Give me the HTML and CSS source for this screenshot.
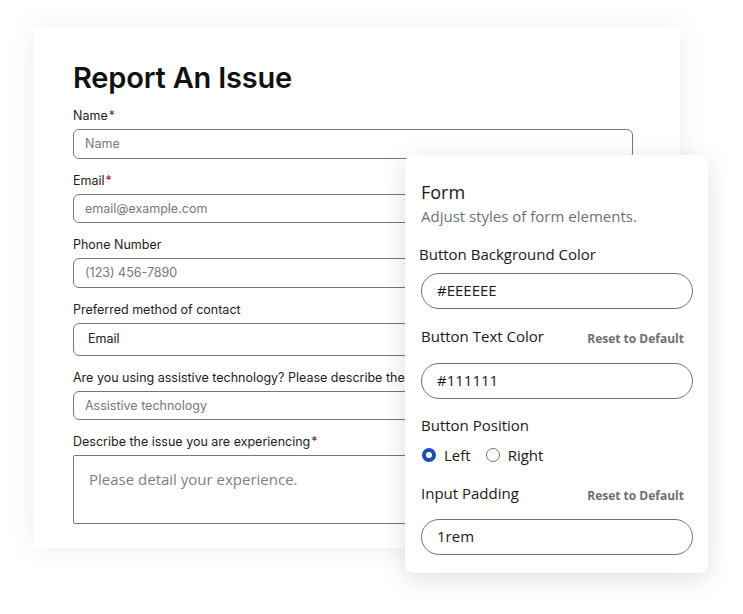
FILE: index.html
```html
<!DOCTYPE html>
<html lang="en">
<head>
  <meta charset="UTF-8">
  <meta name="viewport" content="width=device-width, initial-scale=1.0">
  <title>Report An Issue</title>
  <link rel="stylesheet" href="styles.css">
</head>
<body>

<div class="stage">
  <div class="report-card">
    <h1>Report An Issue</h1>

    <div class="field">
      <label for="name">Name<span class="req">*</span></label>
      <input type="text" id="name" class="text-input" placeholder="Name">
    </div>

    <div class="field">
      <label for="email">Email<span class="req">*</span></label>
      <input type="text" id="email" class="text-input" placeholder="email@example.com">
    </div>

    <div class="field">
      <label for="phone">Phone Number</label>
      <input type="text" id="phone" class="text-input" placeholder="(123) 456-7890">
    </div>

    <div class="field">
      <label for="contact">Preferred method of contact</label>
      <div class="select-box" id="contact">Email</div>
    </div>

    <div class="field">
      <label for="assist">Are you using assistive technology? Please describe the</label>
      <input type="text" id="assist" class="text-input" placeholder="Assistive technology">
    </div>

    <div class="field">
      <label for="issue">Describe the issue you are experiencing<span class="req">*</span></label>
      <textarea id="issue" class="text-area" placeholder="Please detail your experience."></textarea>
    </div>
  </div>

  <!-- style editor panel floating over the form -->
  <div class="style-panel">
    <h2>Form</h2>
    <p class="panel-sub">Adjust styles of form elements.</p>

    <div class="setting first">
      <div class="setting-head"><span>Button Background Color</span></div>
      <div class="pill">#EEEEEE</div>
    </div>

    <div class="setting">
      <div class="setting-head reset-row">
        <span>Button Text Color</span>
        <a href="#" class="reset">Reset to Default</a>
      </div>
      <div class="pill">#111111</div>
    </div>

    <div class="setting tight">
      <div class="setting-head"><span>Button Position</span></div>
      <div class="radios">
        <span class="radio checked"></span><span class="radio-label">Left</span>
        <span class="radio"></span><span class="radio-label">Right</span>
      </div>
    </div>

    <div class="setting">
      <div class="setting-head reset-row">
        <span>Input Padding</span>
        <a href="#" class="reset">Reset to Default</a>
      </div>
      <div class="pill">1rem</div>
    </div>
  </div>
</div>

</body>
</html>
```

FILE: styles.css
```css
body {
  margin: 0;
  padding: 0;
  background-color: #fff;
  font-family: Inter, 'Liberation Sans', sans-serif;
  overflow: hidden;
}

.stage {
  position: relative;
  width: 743px;
  height: 614px;
  padding: 27px 0 0 33px;
  box-sizing: border-box;
}

.report-card {
  width: 647px;
  height: 521px;
  box-sizing: border-box;
  padding: 33px 47px 0 40px;
  background-color: #fff;
  box-shadow: 0 0 28px rgba(0, 0, 0, 0.07);
}

h1 {
  margin: 0 0 12px;
  font-size: 29px;
  line-height: 36px;
  font-weight: 600;
  color: #111;
  letter-spacing: -0.2px;
}

.field {
  margin-bottom: 14px;
}

.field label {
  display: block;
  font-size: 12.5px;
  line-height: 16px;
  color: #1d1d1f;
  margin-bottom: 5px;
  white-space: nowrap;
}

.req {
  color: #8a1538;
  margin-left: 1px;
}

.text-input {
  display: block;
  width: 100%;
  height: 29.5px;
  box-sizing: border-box;
  padding: 0 11px;
  border: 1.5px solid #73767c;
  border-radius: 6px;
  font-family: Inter, 'Liberation Sans', sans-serif;
  font-size: 12.5px;
  color: #222;
  background-color: #fff;
}

.text-input::placeholder {
  color: #75787e;
}

.select-box {
  height: 33px;
  box-sizing: border-box;
  padding: 0 14px;
  border: 1.5px solid #73767c;
  border-radius: 6px;
  font-size: 12.5px;
  line-height: 30px;
  color: #222;
}

.text-area {
  display: block;
  width: 100%;
  height: 69px;
  box-sizing: border-box;
  padding: 13px 15px;
  border: 1.5px solid #73767c;
  border-radius: 2px;
  font-family: 'Open Sans', sans-serif;
  font-size: 15px;
  line-height: 20px;
  resize: none;
}

.text-area::placeholder {
  color: #7b8088;
}

/* floating panel */
.style-panel {
  position: absolute;
  left: 405px;
  top: 155px;
  width: 303px;
  height: 418px;
  box-sizing: border-box;
  padding: 25px 15px 0 16px;
  background-color: #fff;
  border-radius: 8px;
  box-shadow: 0 6px 26px rgba(0, 0, 0, 0.13);
  font-family: 'Open Sans', sans-serif;
}

.style-panel h2 {
  margin: 0;
  font-size: 18px;
  line-height: 24px;
  font-weight: 400;
  color: #1a1a1a;
}

.panel-sub {
  margin: 2px 0 0;
  font-size: 15px;
  line-height: 20px;
  color: #6d7178;
}

.setting {
  margin-top: 16px;
}

.setting.first {
  margin-top: 17px;
}

.setting.tight {
  margin-top: 15px;
}

.setting.first .setting-head {
  margin-left: -2px;
}

.setting-head {
  display: flex;
  justify-content: space-between;
  align-items: flex-start;
  font-size: 15px;
  line-height: 22px;
  color: #1a1a1a;
  margin-bottom: 8px;
}

.setting-head.reset-row {
  margin-bottom: 15.5px;
}

.reset {
  font-size: 12px;
  line-height: 16px;
  font-weight: 700;
  color: #6f6f6f;
  text-decoration: none;
  margin: 6px 9px 0 0;
}

.pill {
  height: 36px;
  box-sizing: border-box;
  border: 1.5px solid #6e7178;
  border-radius: 18px;
  padding: 0 15px;
  font-size: 15px;
  line-height: 33px;
  color: #1a1a1a;
}

.radios {
  display: flex;
  align-items: center;
  height: 22px;
  font-size: 15px;
  color: #1a1a1a;
}

.radio {
  width: 14px;
  height: 14px;
  box-sizing: border-box;
  border: 1.5px solid #6e7178;
  border-radius: 50%;
  margin-left: 1px;
}

.radio.checked {
  border: 4.5px solid #1b4fb8;
}

.radio-label {
  margin-left: 8px;
  margin-right: 14px;
}
```
